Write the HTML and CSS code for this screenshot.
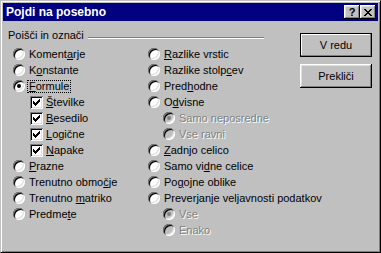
FILE: index.html
```html
<!DOCTYPE html>
<html lang="sl">
<head>
  <meta charset="UTF-8">
  <title>Pojdi na posebno</title>
  <link rel="stylesheet" href="styles.css">
</head>
<body>

  <div class="window">
    <div class="titlebar">
      <span class="title">Pojdi na posebno</span>
      <div class="tb-buttons">
        <span class="tb-btn help">?</span>
        <span class="tb-btn">
          <svg width="8" height="7" viewBox="0 0 8 7" shape-rendering="crispEdges"><path d="M0 0h2v1h-2zM6 0h2v1h-2zM1 1h2v1h-2zM5 1h2v1h-2zM2 2h4v1h-4zM3 3h2v1h-2zM2 4h4v1h-4zM1 5h2v1h-2zM5 5h2v1h-2zM0 6h2v1h-2zM6 6h2v1h-2z" fill="#000"/></svg>
        </span>
      </div>
    </div>

    <div class="content">
      <div class="group">
        <div class="group-head">
          <span>Poišči in označi</span>
          <span class="etch"></span>
        </div>
        <div class="columns">
          <div class="col col-left">
            <div class="opt"><span class="radio"></span><span>Koment<u>a</u>rje</span></div>
            <div class="opt"><span class="radio"></span><span>K<u>o</u>nstante</span></div>
            <div class="opt"><span class="radio on"></span><span class="focus"><u>F</u>ormule</span></div>
            <div class="opt sub"><span class="check"><svg width="7" height="7" viewBox="0 0 7 7" shape-rendering="crispEdges"><path d="M0 2h1v3h-1zM1 3h1v3h-1zM2 4h1v3h-1zM3 3h1v3h-1zM4 2h1v3h-1zM5 1h1v3h-1zM6 0h1v3h-1z" fill="#000"/></svg></span><span><u>Š</u>tevilke</span></div>
            <div class="opt sub"><span class="check"><svg width="7" height="7" viewBox="0 0 7 7" shape-rendering="crispEdges"><path d="M0 2h1v3h-1zM1 3h1v3h-1zM2 4h1v3h-1zM3 3h1v3h-1zM4 2h1v3h-1zM5 1h1v3h-1zM6 0h1v3h-1z" fill="#000"/></svg></span><span><u>B</u>esedilo</span></div>
            <div class="opt sub"><span class="check"><svg width="7" height="7" viewBox="0 0 7 7" shape-rendering="crispEdges"><path d="M0 2h1v3h-1zM1 3h1v3h-1zM2 4h1v3h-1zM3 3h1v3h-1zM4 2h1v3h-1zM5 1h1v3h-1zM6 0h1v3h-1z" fill="#000"/></svg></span><span><u>L</u>ogične</span></div>
            <div class="opt sub"><span class="check"><svg width="7" height="7" viewBox="0 0 7 7" shape-rendering="crispEdges"><path d="M0 2h1v3h-1zM1 3h1v3h-1zM2 4h1v3h-1zM3 3h1v3h-1zM4 2h1v3h-1zM5 1h1v3h-1zM6 0h1v3h-1z" fill="#000"/></svg></span><span><u>N</u>apake</span></div>
            <div class="opt"><span class="radio"></span><span><u>P</u>razne</span></div>
            <div class="opt"><span class="radio"></span><span>Trenutno obmo<u>č</u>je</span></div>
            <div class="opt"><span class="radio"></span><span>Trenutno <u>m</u>atriko</span></div>
            <div class="opt"><span class="radio"></span><span>Predme<u>t</u>e</span></div>
          </div>
          <div class="col col-right">
            <div class="opt"><span class="radio"></span><span><u>R</u>azlike vrstic</span></div>
            <div class="opt"><span class="radio"></span><span>Razlike stolp<u>c</u>ev</span></div>
            <div class="opt"><span class="radio"></span><span>Pred<u>h</u>odne</span></div>
            <div class="opt"><span class="radio"></span><span>O<u>d</u>visne</span></div>
            <div class="opt sub disabled"><span class="radio on"></span><span>Samo neposredne</span></div>
            <div class="opt sub disabled"><span class="radio"></span><span>Vse ravni</span></div>
            <div class="opt"><span class="radio"></span><span><u>Z</u>adnjo celico</span></div>
            <div class="opt"><span class="radio"></span><span>Samo vi<u>d</u>ne celice</span></div>
            <div class="opt"><span class="radio"></span><span>Po<u>g</u>ojne oblike</span></div>
            <div class="opt"><span class="radio"></span><span>Prever<u>j</u>anje veljavnosti podatkov</span></div>
            <div class="opt sub disabled"><span class="radio on"></span><span>Vse</span></div>
            <div class="opt sub disabled"><span class="radio"></span><span>Enako</span></div>
          </div>
        </div>
      </div>

      <div class="buttons">
        <button class="btn default">V redu</button>
        <button class="btn">Prekliči</button>
      </div>
    </div>
  </div>

</body>
</html>
```

FILE: styles.css
```css
body {
  margin: 0;
  font-family: "Liberation Sans", Arial, sans-serif;
  font-size: 11px;
  background-color: #c0c0c0;
}
.window {
  width: 381px;
  height: 253px;
  box-sizing: border-box;
  padding: 2px;
  background-color: #c0c0c0;
  border: 1px solid;
  border-color: #c0c0c0 #000 #000 #c0c0c0;
  box-shadow: inset 1px 1px #fff, inset -1px -1px #808080;
  display: flex;
  flex-direction: column;
}
.titlebar {
  height: 18px;
  background-color: #000080;
  display: flex;
  align-items: center;
  padding: 0 2px 0 3px;
}
.title {
  color: #fff;
  font-size: 12px;
  font-weight: bold;
  flex: 1;
}
.tb-buttons {
  display: flex;
}
.tb-btn {
  width: 16px;
  height: 14px;
  box-sizing: border-box;
  background-color: #c0c0c0;
  box-shadow: inset -1px -1px #000, inset 1px 1px #fff, inset -2px -2px #808080, inset 2px 2px #dfdfdf;
  display: flex;
  align-items: center;
  justify-content: center;
}
.tb-btn.help {
  font-weight: bold;
  font-size: 11px;
  line-height: 14px;
  padding-bottom: 1px;
}
.content {
  flex: 1;
  display: flex;
  padding: 8px 6px 0 5px;
}
.group {
  width: 256px;
  flex: none;
}
.group-head {
  display: flex;
  height: 13px;
  line-height: 13px;
}
.etch {
  flex: 1;
  margin: 8px 0 0 4px;
  height: 0;
  border-top: 1px solid #808080;
  border-bottom: 1px solid #fff;
}
.columns {
  display: flex;
  margin-top: 4px;
  padding-left: 5px;
}
.col-left {
  width: 135px;
  flex: none;
}
.col-right {
  flex: none;
}
.opt {
  height: 16px;
  display: flex;
  align-items: center;
  white-space: nowrap;
}
.opt.sub {
  padding-left: 17px;
}
.col-right .opt.sub {
  padding-left: 15px;
}
u {
  text-underline-offset: 1px;
}
.radio {
  width: 12px;
  height: 12px;
  flex: none;
  margin-right: 4px;
  border-radius: 50%;
  background-color: #fff;
  box-shadow: inset 1px 1px #808080, inset -1px -1px #fff, inset 2px 2px #000, inset -2px -2px #dfdfdf;
  display: flex;
  align-items: center;
  justify-content: center;
}
.radio.on::after {
  content: "";
  width: 4px;
  height: 4px;
  border-radius: 50%;
  background-color: #000;
}
.check {
  width: 13px;
  height: 13px;
  flex: none;
  box-sizing: border-box;
  margin-right: 3px;
  background-color: #fff;
  box-shadow: inset 1px 1px #808080, inset -1px -1px #fff, inset 2px 2px #000, inset -2px -2px #dfdfdf;
  display: flex;
  align-items: center;
  justify-content: center;
}
.focus {
  margin-left: -2px;
  padding: 0 1px;
  border: 1px dotted #000;
  line-height: 11px;
}
.disabled {
  color: #808080;
  text-shadow: 1px 1px #fff;
}
.disabled .radio {
  background-color: #c0c0c0;
}
.disabled .radio.on::after {
  background-color: #808080;
}
.buttons {
  margin-left: auto;
  margin-top: 4px;
  display: flex;
  flex-direction: column;
  gap: 7px;
}
.btn {
  width: 72px;
  height: 24px;
  padding: 0;
  font-family: inherit;
  font-size: 11px;
  color: #000;
  background-color: #c0c0c0;
  border: none;
  box-shadow: inset -1px -1px #000, inset 1px 1px #fff, inset -2px -2px #808080, inset 2px 2px #dfdfdf;
}
.btn.default {
  border: 1px solid #000;
  box-shadow: inset -1px -1px #808080, inset 1px 1px #fff;
}
```
